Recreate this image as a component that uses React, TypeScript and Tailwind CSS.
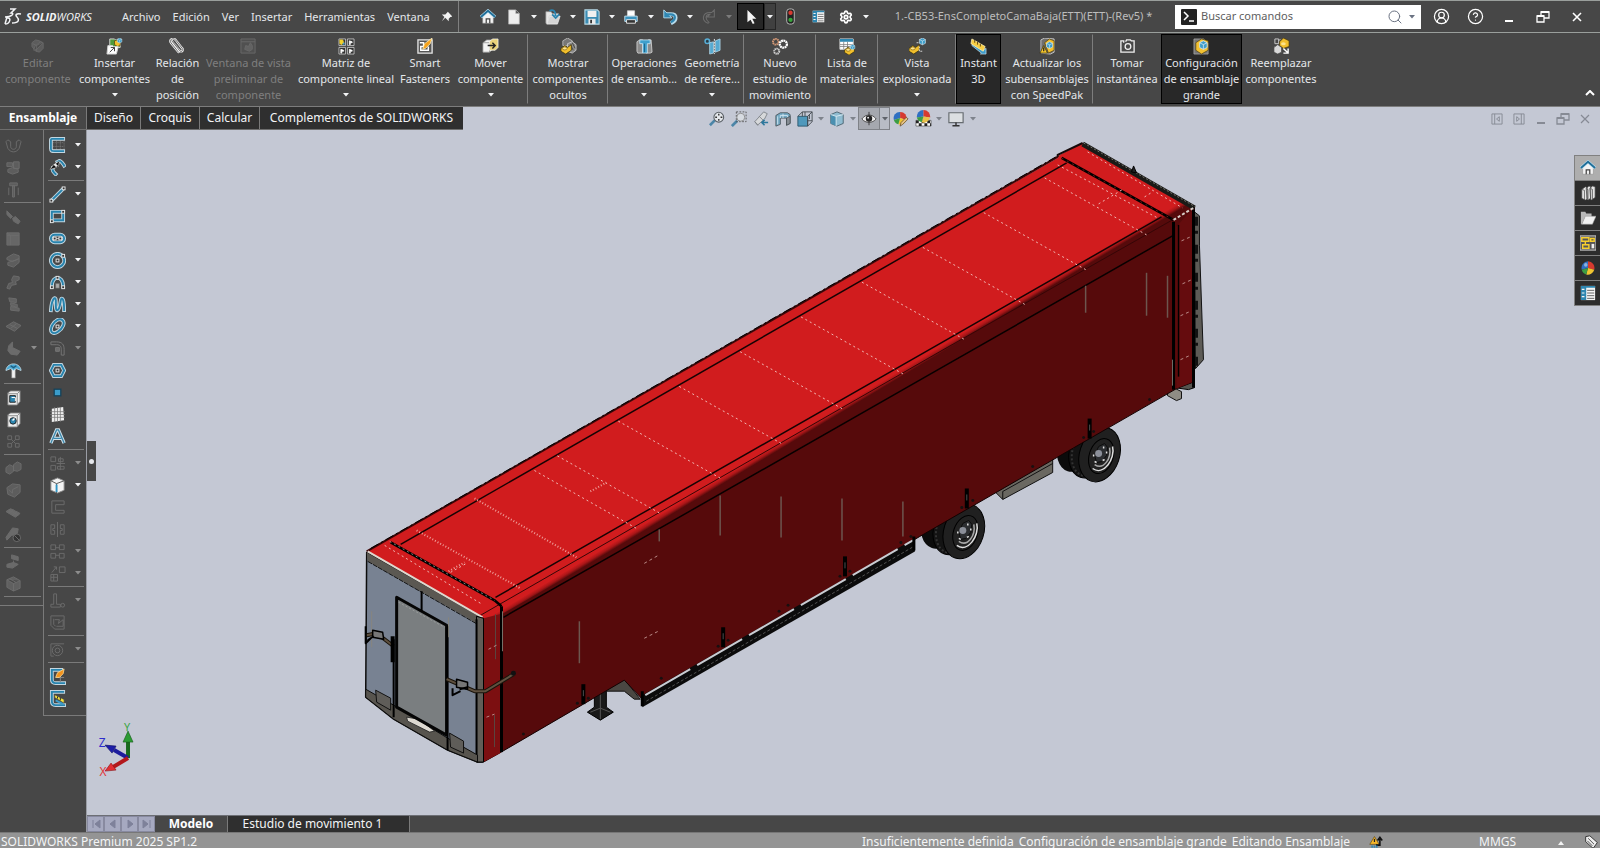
import React from "react";
import { Search, CircleUserRound, CircleHelp, Settings } from "lucide-react";

type IconName = string;

/* Two-tone stroke: pale outline with a blue core. */
const Duo = ({ d }: { d: string }) => (
  <>
    <path d={d} fill="none" stroke="#c3d6e0" strokeWidth="4" strokeLinecap="square" />
    <path d={d} fill="none" stroke="#2783ad" strokeWidth="2" strokeLinecap="square" />
  </>
);

const Node = ({ x, y }: { x: number; y: number }) => (
  <rect x={x - 1.5} y={y - 1.5} width="3" height="3" fill="#333" stroke="#e8e8e8" />
);

const Part = ({ c = "#f2bf2c" }: { c?: string }) => (
  <>
    <path d="M2 10l4-3 3 2 4-3v6l-6 4-5-3z" fill={c} stroke="#3b3210" strokeWidth=".8" />
    <ellipse cx="6" cy="10" rx="2.5" ry="1.6" fill="#ffe48a" stroke="#6b5310" strokeWidth=".6" />
  </>
);

const Cube = ({ x = 0, y = 0, s = 1 }: { x?: number; y?: number; s?: number }) => (
  <g transform={`translate(${x} ${y}) scale(${s})`}>
    <path d="M0 2l4-2 4 2v5l-4 2-4-2z" fill="#3d9dc9" stroke="#dcebf3" strokeWidth=".8" />
    <path d="M0 2l4 2 4-2M4 4v5" fill="none" stroke="#dcebf3" strokeWidth=".8" />
  </g>
);

const drawings: Record<IconName, React.ReactNode> = {
  editPart: (
    <g fill="#666" stroke="#7b7b7b" strokeWidth=".8">
      <path d="M2 5l4-3 4 1 4 2v6l-4 4-4-1-4-5z" />
      <path d="M5 9l6-5 2 2-6 6-3 1z" fill="#505050" />
      <path d="M3 6l4 2 5-3M7 8v6" fill="none" />
    </g>
  ),
  insertPart: (
    <>
      <path d="M4 1h5l1 1h5v8H4z" fill="#4e9a3a" stroke="#d8d8d8" />
      <path d="M9 3l3-1 3 2v4l-3 1-3-2z" fill="#f2bf2c" stroke="#47380a" strokeWidth=".7" />
      <Cube x={12} y={0} s={0.6} />
      <path d="M2 8h5l1 1h5l-2 8H1z" fill="#fff" stroke="#cfcfcf" />
      <path d="M4 15l5-5m0 4v-4H5" fill="none" stroke="#333" />
    </>
  ),
  clip: (
    <g fill="none" strokeLinecap="round">
      <path d="M3 3l8 10c2 3 5 0 3-2L7 2C4-1 0 2 2 5l8 10" stroke="#f0f0f0" strokeWidth="2.4" />
      <path d="M3 3l8 10c2 3 5 0 3-2L7 2C4-1 0 2 2 5l8 10M5 4l7 8" stroke="#5c5c5c" strokeWidth=".9" />
    </g>
  ),
  previewWin: (
    <g fill="none" stroke="#777">
      <path d="M1 1h15v15H1zM1 4h15" fill="#555" />
      <path d="M5 12l1-4 3 1 2-4 2 3v4l-3 2z" fill="#6e6e6e" />
    </g>
  ),
  pattern: (
    <g strokeWidth=".8">
      <path d="M1 1h7v7H1zM10 1h7v7h-7zM1 10h7v7H1zM10 10h7v7h-7z" fill="#333" stroke="#d5d5d5" />
      <path d="M2 2h3l1 3-2 2-2-1z" fill="#f2d02c" stroke="#f2d02c" />
      <path d="M5 5h2v2H5z" fill="#4aa7d2" />
      <path d="M12 3v4h1V5h2V4zM3 12v4h1v-2h2v-1zM12 12v4h1v-2h2v-1z" fill="#fff" stroke="#fff" />
    </g>
  ),
  smart: (
    <>
      <path d="M1 2h15v14H1z" fill="#555" stroke="#e6e6e6" strokeWidth="1.4" />
      <path d="M3 5h4v4H4v4h8V9" fill="none" stroke="#fff" strokeWidth="1.6" />
      <path d="M6 12l2-6 8-6-2 6-5 5z" fill="#f6a21c" stroke="#fff3c0" strokeWidth=".8" />
    </>
  ),
  move: (
    <>
      <path d="M1 5l4-3h7v9l-4 4H1z" fill="#f4f4f4" stroke="#9a9a9a" strokeWidth=".8" />
      <path d="M1 5h7v10M8 5l4-3" fill="none" stroke="#888" strokeWidth=".8" />
      <path d="M8 4l3-3h6v9l-3 3H8z" fill="#e9d27a" stroke="#fff" strokeWidth=".7" />
      <path d="M6 8h8M11 5l3 3-3 3" fill="none" stroke="#222" strokeWidth="1.5" />
    </>
  ),
  showHidden: (
    <>
      <path d="M3 3l5-3 5 3v5H3z" fill="#777" stroke="#c8c8c8" strokeWidth=".8" />
      <path d="M8 6l5-2 4 3v6l-4 3-5-2z" fill="#8c8c8c" stroke="#d8d8d8" strokeWidth=".8" />
      <path d="M11 7l3 6M13 5l3 6" stroke="#444" />
      <g transform="translate(-1 1)"><Part /></g>
    </>
  ),
  asmFeat: (
    <>
      <path d="M1 4l3-2h3v14H2l-1-2zM11 4l2-2h3l1 13-2 1h-4z" fill="#8c8c8c" stroke="#e2e2e2" strokeWidth=".8" />
      <path d="M4 2h11v4h-3v10H7V6H4z" fill="#3f9fcc" stroke="#d7edf8" strokeWidth=".8" />
      <path d="M9 6v9" stroke="#1c6387" />
    </>
  ),
  refGeo: (
    <>
      <circle cx="3.5" cy="3.5" r="2.4" fill="#2a3c46" stroke="#58aed6" strokeWidth="1.6" />
      <path d="M6 5l4-1v12l-4 1zM12 3l5-2v12l-5 2z" fill="#55a9d0" stroke="#b7dcee" strokeWidth=".8" />
      <path d="M11 1v16" stroke="#eee" strokeDasharray="2 1" />
    </>
  ),
  study: (
    <g fill="none">
      <circle cx="4" cy="4" r="3" stroke="#d79a76" strokeWidth="2" strokeDasharray="1.6 .6" />
      <circle cx="12" cy="6.5" r="3.8" stroke="#fff" strokeWidth="2.4" strokeDasharray="2 .5" />
      <circle cx="5" cy="14" r="2.7" stroke="#cfcfcf" strokeWidth="2" strokeDasharray="1.5 .5" />
    </g>
  ),
  bom: (
    <>
      <path d="M1 1h14v11H1z" fill="#fff" stroke="#d8d8d8" />
      <path d="M1 1h14v3H1z" fill="#2f88b2" />
      <path d="M1 7h14M1 9h14M5 4v8M9 4v8" stroke="#777" strokeWidth=".8" />
      <g transform="translate(4 3) scale(.95)"><Part /></g>
      <Cube x={12} y={7} s={0.6} />
    </>
  ),
  exploded: (
    <>
      <g transform="translate(-2 1)"><Part /></g>
      <Cube x={11} y={0} s={0.8} />
      <path d="M11 9v5h3M8 5h2" fill="none" stroke="#eee" strokeWidth=".9" strokeDasharray="2 1" />
    </>
  ),
  instant: (
    <>
      <path d="M2 8l10 8-1 1h6v-6l-2 1L4 4z" fill="#3d9bca" stroke="#cfe6f2" strokeWidth=".7" />
      <path d="M2 1l14 8-2 5L1 6z" fill="#f7cf45" stroke="#fff0b8" strokeWidth=".8" />
      <path d="M5 2v3M8 4v3M11 6v3" stroke="#5a4510" />
    </>
  ),
  speedpak: (
    <>
      <path d="M2 2l4-2 10 1v14l-4 2-10-1z" fill="#6f6f6f" stroke="#d2d2d2" strokeWidth=".9" />
      <path d="M6 5l5-4 5 2v10l-6 3z" fill="#f2bf2c" stroke="#4a3a0a" strokeWidth=".7" />
      <Cube x={8} y={4} s={0.8} />
      <path d="M5 8l4 8H1z" fill="#f8c92e" stroke="#3c3008" strokeWidth=".8" />
      <path d="M5 10v4" stroke="#222" strokeWidth="1.3" />
    </>
  ),
  camera: (
    <g fill="none" stroke="#efefef" strokeWidth="1.4">
      <path d="M5 5V3H2v12h14V3h-3l-1-1H8L7 4" />
      <circle cx="9.500" cy="9" r="3" />
    </g>
  ),
  largeAsm: (
    <>
      <path d="M1 1h10l5 4v12H1z" fill="#757575" stroke="#a9a9a9" strokeWidth=".8" />
      <path d="M3 5l6-4 7 2v10l-7 4-6-4z" fill="#f3c233" stroke="#4b3b0a" strokeWidth=".7" />
      <Cube x={7} y={3} s={1} />
    </>
  ),
  replace: (
    <>
      <path d="M2 1h4v5H2zM2 9v3M8 1l-2 2" stroke="#ccc" fill="none" />
      <path d="M7 4l4-4 6 3v6l-6 2-4-3z" fill="#f2bf2c" stroke="#463609" strokeWidth=".7" />
      <ellipse cx="11" cy="6" rx="2.500" ry="1.600" fill="#ffe48a" />
      <path d="M1 10l4-3 4 3v5l-4 2-4-2z" fill="#d9d9d9" stroke="#444" strokeWidth=".7" />
      <path d="M11 11l5 5M16 11v5h-5" fill="none" stroke="#fff" strokeWidth="1.5" />
    </>
  ),
  home: (
    <>
      <path d="M3 8l6-5 6 5v8H3z" fill="#f3f3f3" stroke="#888" strokeWidth=".6" />
      <path d="M1 9l8-7 8 7" fill="none" stroke="#bfe0f0" strokeWidth="3.4" />
      <path d="M1 9l8-7 8 7" fill="none" stroke="#1f6e98" strokeWidth="2" />
      <path d="M7 16v-5h4v5" fill="none" stroke="#444" strokeWidth="1.4" />
    </>
  ),
  newDoc: <path d="M3 1h8l4 4v12H3zM11 1v4h4" fill="#eee" stroke="#b5b5b5" strokeWidth=".8" />,
  open: (
    <>
      <path d="M1 3h6l1 2h7v3H5L3 16H1z" fill="#e6e6e6" stroke="#999" strokeWidth=".8" />
      <path d="M5 8h12l-3 9H2z" fill="#d4d4d4" stroke="#f4f4f4" strokeWidth=".8" />
      <path d="M5 2c4-2 7 0 7 6M8 6l4 4 4-4" fill="none" stroke="#2a84b0" strokeWidth="2" />
    </>
  ),
  save: (
    <>
      <path d="M1 1h14l2 2v14H1z" fill="#3c8cb3" stroke="#b8dbea" strokeWidth="1.2" />
      <path d="M4 2h10v7H4z" fill="#f0f0f0" />
      <path d="M5 11h8v6H5z" fill="#e8e8e8" />
      <path d="M7 12h2v4H7z" fill="#333" />
    </>
  ),
  print: (
    <>
      <path d="M5 2h8v6H5z" fill="#fff" stroke="#ccc" />
      <path d="M2 8h14v6H2z" fill="#3c94c0" stroke="#cbe5f1" />
      <path d="M4 12h10v4H4z" fill="#333" stroke="#eee" />
    </>
  ),
  undo: (
    <>
      <path d="M4 6h6c7 0 7 7 0 10" fill="none" stroke="#b8dcec" strokeWidth="4.500" />
      <path d="M2 1v9h9z" fill="#2f86b2" stroke="#b8dcec" />
      <path d="M4 6h6c6 0 6 6 0 9" fill="none" stroke="#2f86b2" strokeWidth="2.400" />
    </>
  ),
  redo: (
    <path d="M15 1v8H7l3-3c-5 0-6 5-1 9l-1 1C0 13 1 3 12 4z" fill="none" stroke="#6c6c6c" strokeWidth="1.200" />
  ),
  cursor: <path d="M5 1v14l3.500-3 2.500 5 2-1-2.500-5H15z" fill="#f5f5f5" />,
  traffic: (
    <>
      <rect x="5" y="1" width="8" height="16" rx="3" fill="#222" stroke="#bdbdbd" />
      <circle cx="9" cy="5" r="2.300" fill="#d63a31" />
      <circle cx="9" cy="12.500" r="2.300" fill="#36a53a" />
    </>
  ),
  props: (
    <>
      <path d="M1 1h16v16H1z" fill="#f5f5f5" />
      <path d="M1 1h6v16H1zM1 1h16v2H1z" fill="#2e86b0" />
      <path d="M2 5h3M2 9h3M2 13h3" stroke="#f5f5f5" strokeWidth="1.400" />
      <path d="M8 6h8M8 9h8M8 12h8M8 15h8" stroke="#555" />
    </>
  ),
  zoomFit: (
    <g fill="none">
      <path d="M7 10l-6 6" stroke="#4c86a8" strokeWidth="3" />
      <circle cx="11" cy="7" r="5.500" fill="#e3e6ea" stroke="#5a6066" strokeWidth="1.200" />
      <path d="M11 3v2m0 4v2M7 7h2m4 0h2" stroke="#333" strokeWidth="1.600" />
    </g>
  ),
  zoomArea: (
    <g fill="none">
      <path d="M7 11l-6 6" stroke="#4c86a8" strokeWidth="3" />
      <path d="M6 1h11v11H6z" stroke="#555" strokeDasharray="2 1.500" />
      <circle cx="11" cy="7" r="4.500" fill="#d7dbe1" stroke="#888" />
    </g>
  ),
  prevView: (
    <>
      <path d="M2 12L12 1l4 2-3 6-8 7z" fill="#d6d8da" stroke="#7d8287" />
      <path d="M2 12l4 4M7 6l5 5" stroke="#7d8287" />
      <path d="M17 13h-6m2-3l-3 3 3 3" fill="none" stroke="#2d789d" strokeWidth="1.800" />
    </>
  ),
  section: (
    <>
      <path d="M1 5l5-3h8l3 2v10l-4 2V8H6v7l-5 2z" fill="#73a8c2" stroke="#414b52" strokeWidth=".9" />
      <path d="M6 8V5h8v3M3 6v9M9 3v5" fill="none" stroke="#d3e7f1" />
      <path d="M13 8l4-2v8l-4 2z" fill="#888f96" stroke="#3c4247" strokeWidth=".7" />
    </>
  ),
  viewOrient: (
    <>
      <path d="M1 6h11v11H1z" fill="#4f98bb" stroke="#2b566b" />
      <path d="M1 6l5-5h11v11l-5 5M6 1v5M17 1l-5 5M12 6v11M12 11h5M9 1v5M14 4v5" fill="none" stroke="#3f464c" />
    </>
  ),
  displayStyle: (
    <>
      <path d="M2 4l7-3 7 3v10l-7 3-7-3z" fill="#8fbcd1" stroke="#48616e" />
      <path d="M2 4l6 2v11l-6-3z" fill="#4a8fb0" />
      <path d="M2 4l6 2 8-2M8 6v11" fill="none" stroke="#dcecf4" />
    </>
  ),
  eye: (
    <>
      <path d="M1 9c4-6 12-6 16 0-4 5-12 5-16 0z" fill="#efefef" stroke="#444" />
      <circle cx="9" cy="8.500" r="3.600" fill="#222" />
      <path d="M9 1v15" stroke="#333" />
      <circle cx="8" cy="7.500" r="1" fill="#fff" />
    </>
  ),
  ball: (
    <>
      <path d="M9 9L9 1.500A7.500 7.500 0 0 0 2 11z" fill="#2f6fc2" />
      <path d="M9 9V1.500A7.500 7.500 0 0 1 16 11z" fill="#d63a2f" />
      <path d="M9 9l7 2A7.500 7.500 0 0 1 7 16.300z" fill="#f0c431" />
      <path d="M9 9l-2 7.300A7.500 7.500 0 0 1 2 11z" fill="#3c9d43" />
      <circle cx="6.500" cy="5.500" r="2" fill="#fff" opacity=".45" />
    </>
  ),
  appearance: (
    <>
      <path d="M8 8V1a7 7 0 0 0-7 9z" fill="#2f6fc2" />
      <path d="M8 8V1a7 7 0 0 1 7 9z" fill="#d63a2f" />
      <path d="M8 8l7 2a7 7 0 0 1-9 5z" fill="#f0c431" />
      <path d="M8 8l-2 7a7 7 0 0 1-5-5z" fill="#3c9d43" />
      <path d="M8 17l1-4 6-6 2 2-6 6z" fill="#e6c184" stroke="#5b4422" strokeWidth=".8" />
    </>
  ),
  scene: (
    <>
      <path d="M1 11h16v6H1z" fill="#fff" stroke="#333" strokeWidth=".6" />
      <path d="M1 11h3v3H1zM7 11h3v3H7zM13 11h3v3h-3zM4 14h3v3H4zM10 14h3v3h-3zM16 14h1v3h-1z" fill="#222" />
      <path d="M9 7V0a7 7 0 0 0-7 8z" fill="#2f6fc2" />
      <path d="M9 7V0a7 7 0 0 1 7 8z" fill="#d63a2f" />
      <path d="M9 7l7 1a7 7 0 0 1-9 5z" fill="#e9c14a" />
      <path d="M9 7l-2 6a7 7 0 0 1-5-5z" fill="#3c9d43" />
    </>
  ),
  monitor: (
    <>
      <path d="M1 2h16v11H1z" fill="#dcdfe2" stroke="#666b70" strokeWidth="1.300" />
      <path d="M9 13v3M5 16.500h8" stroke="#333" strokeWidth="1.600" />
    </>
  ),
  library: (
    <g fill="#e6e6e6" stroke="#444" strokeWidth=".8">
      <path d="M2 5l4-3 2 1v13l-2 1-4-2zM7 4l3-3 2 1v13l-3 2-1-1zM11 4l3-3 3 1v12l-4 3-1-1z" />
      <path d="M2 5l3 1v11M7 4l2 1v11M12 4l2 1v11" fill="none" />
    </g>
  ),
  folder: (
    <>
      <path d="M1 2h5l1 2h6v4H6L2 16H1z" fill="#b9b9b9" />
      <path d="M6 7h12l-4 9H2z" fill="#f1f1f1" stroke="#999" strokeWidth=".6" />
    </>
  ),
  viewPalette: (
    <>
      <path d="M0 1h18v16H0z" fill="#555" stroke="#ddd" />
      <path d="M2 3h8v4H2zM6 7v4M3 11h7v4H3zM12 4h4v3h-4z" fill="none" stroke="#f6ce2e" strokeWidth="1.600" />
      <path d="M13 10h3v5h-3z" fill="#eee" />
    </>
  ),
  sketch: (
    <>
      <path d="M4 2h12v12H4zM8 2v12M12 2v12M4 6h12M4 10h12" fill="none" stroke="#7c7c7c" strokeDasharray="1 1" />
      <Duo d="M15 2H3c-1 0-1 1-1 2v8c0 3 1 3 4 3h9" />
    </>
  ),
  dimension: (
    <>
      <Duo d="M9 3l2-1c2 0 3 2 5 5M4 10c-1 3 1 4 3 6" />
      <path d="M3 10l7-6" stroke="#eee" strokeWidth="3.600" />
      <path d="M1 11l4-5 3 3zM11 2L7 5l3 3z" fill="#111" stroke="#ccc" strokeWidth=".5" />
    </>
  ),
  line: (<><Duo d="M4 14L14 4" /><Node x={2.5} y={15.5} /><Node x={15.5} y={2.5} /></>),
  rect: (<><Duo d="M3 4h12v9H3z" /><Node x={3} y={14} /><Node x={15} y={4} /></>),
  slot: (<><Duo d="M6 5h6a4 4 0 0 1 0 8H6a4 4 0 0 1 0-8z" /><path d="M6 9h6" stroke="#bbb" /><Node x={6} y={9} /><Node x={12} y={9} /></>),
  circle: (<><Duo d="M9 2a7 7 0 1 0 .1 0" /><Node x={9} y={9} /><Node x={15} y={4} /></>),
  arc: (<><Duo d="M3 13c0-12 12-12 12 0" /><path d="M7 10h4v5H7z" fill="#aaa" stroke="#666" strokeWidth=".6" /><Node x={3} y={14} /><Node x={15} y={14} /><Node x={9} y={4} /></>),
  spline: <Duo d="M2 15C3 3 6 1 7 3s-1 13 2 12 3-11 4-12 3 0 3 12" />,
  ellipse: (<><Duo d="M3 15C0 11 5 4 9 2s8 1 6 6-9 10-12 7z" /><Node x={9} y={9} /></>),
  fillet: (<g fill="none" stroke="#767676"><path d="M2 2h6c6 0 8 3 8 8v6h-3v-6c0-3-1-5-5-5H2z" /><path d="M7 8h4v4H7z" fill="#6b6b6b" /></g>),
  polygon: (<><Duo d="M5 3h8l3 6-3 6H5L2 9z" /><Node x={9} y={9} /></>),
  point: <rect x="5.500" y="5.500" width="7" height="7" fill="#3a9cca" stroke="#16435a" strokeWidth="1.400" />,
  grid: (<><path d="M3 3l12-2 1 14-13 2z" fill="#eee" /><path d="M6 1v16M9 1v16M12 1v16M1 6h16M1 9h16M1 12h16" stroke="#777" strokeWidth=".8" /></>),
  text: (
    <>
      <path d="M2 16L8 2h2l6 14M5 11h8" fill="none" stroke="#cfe0e9" strokeWidth="3.600" />
      <path d="M2 16L8 2h2l6 14M5 11h8" fill="none" stroke="#3c87ab" strokeWidth="1.400" />
    </>
  ),
  whiteCube: (
    <>
      <path d="M2 4l7-3 7 3v10l-7 3-7-3z" fill="#f4f4f4" stroke="#888" />
      <path d="M2 4l6 3 8-3M8 7v10" fill="none" stroke="#555" />
      <path d="M8 8v8" stroke="#2f94c4" strokeWidth="2" />
    </>
  ),
  hole: (
    <>
      <path d="M3 4l3-2h10v11l-3 4H3z" fill="#eee" stroke="#777" />
      <path d="M13 16V5H3M13 5l3-3" fill="none" stroke="#888" />
      <path d="M5 7h6v7H5z" fill="#2d86b0" stroke="#222" />
      <path d="M7 9h4v4" stroke="#fff" fill="none" />
    </>
  ),
  holeRound: (
    <>
      <path d="M3 4l3-2h10v11l-3 4H3z" fill="#eee" stroke="#777" />
      <path d="M13 16V5H3M13 5l3-3" fill="none" stroke="#888" />
      <circle cx="8.500" cy="10.500" r="3.400" fill="#2d86b0" stroke="#222" />
      <path d="M8 10l2-2" stroke="#fff" strokeWidth="1.600" />
    </>
  ),
  anchor: (
    <>
      <path d="M7 6h4v11H7z" fill="#f2f2f2" stroke="#777" strokeWidth=".7" />
      <path d="M1 9c0-3 3-7 8-7s8 4 8 7l-5-2-3 2-3-2z" fill="#4aa7d2" stroke="#d1eaf5" strokeWidth=".8" />
      <path d="M6 4l3 2 3-2" stroke="#1f5f80" fill="none" strokeWidth="1.400" />
    </>
  ),
  sketchEdit: (
    <>
      <Duo d="M13 2H3v10c0 3 1 4 4 4h9" />
      <path d="M8 10h8M12 6v9" stroke="#888" />
      <path d="M7 10l2-5 7-4-1 5-4 4z" fill="#f2921d" stroke="#ffe09a" strokeWidth=".8" />
    </>
  ),
  sketchInstant: (
    <>
      <Duo d="M15 2H3v10c0 3 1 4 4 4h9" />
      <path d="M6 5l10 5v4L6 8z" fill="#f6e33c" stroke="#444" strokeWidth=".7" />
      <path d="M9 7v2M12 8v3" stroke="#222" />
      <path d="M7 11l8 4" stroke="#3b9dcb" strokeWidth="2" />
    </>
  ),
  d_horseshoe: <path d="M3 3l3 2v5c0 4 6 4 6 0V5l3-2M3 3L1 5l2 7c3 5 9 5 12 0l2-7-2-2" />,
  d_blocks: <path d="M2 4h6v4H2zM9 3h6v7H9zM3 11l5-2 6 2v3l-6 2-5-2z" fill="#5d5d5d" />,
  d_bolt: <path d="M5 2h8v3H5zM8 5h2v12H8zM4 7v8M14 7v8" fill="#5d5d5d" />,
  d_chain: <path d="M2 3l6 6-2 2-4-4zM8 11l3-2 5 5-2 3-5-3z" fill="#6b6b6b" />,
  d_box: <path d="M2 3h13v13H2zM2 6h13M6 6v10M2 3l4 3" fill="#666" />,
  d_hinge: <path d="M2 6l7-4 6 2v3l-7 3-6-2zM3 11l7-2 5-2v4l-6 5-6-2z" fill="#5d5d5d" />,
  d_steps: <path d="M9 2l6 1v3l-4 2 1 3-5 1-2 4-3-1 2-5 4-1-1-3z" fill="#5d5d5d" />,
  d_stack: <path d="M4 2l8 1v4l-7-1zM6 7l7 2v3l-7-2zM6 11l9 2v3l-9-1z" fill="#626262" />,
  d_plane: <path d="M1 9l8-5 8 4-7 6zM5 7l8 4M12 6l-6 5" fill="#5d5d5d" />,
  d_elbow: <path d="M4 6l4-4v6l8 4-3 4-7-1-3-4z" fill="#6b6b6b" />,
  d_cross: <path d="M3 3h4v4H3zM11 3h4v4h-4zM3 11h4v4H3zM11 11h4v4h-4zM7 7l4 4M11 7l-4 4" />,
  d_parts: <path d="M1 8l4-3 4 2v5l-4 3-4-2zM9 5l4-3 4 2v6l-4 2-4-1z" fill="#5d5d5d" />,
  d_rotate: <path d="M2 6l6-4 8 1v8l-6 5-7-3zM4 8l4 4M8 12V8l6-3" fill="#5d5d5d" />,
  d_mat: <path d="M1 8l5-3 10 5-5 4zM4 6l10 6M9 6l-5 4M13 8l-5 4" fill="#6a6a6a" />,
  d_cancel: (<><path d="M8 2l6 1-1 5-6 2-5 5-1-3z" fill="#6a6a6a" /><circle cx="12.500" cy="12.500" r="4" fill="#333" /><path d="M10 10l5 5" /></>),
  d_shelf: <path d="M7 2l7 2v4l-7-2zM9 8v3M2 12l7-2 5 2-6 4-6-1z" fill="#6a6a6a" />,
  d_brick: <path d="M2 5l7-3 7 4v8l-7 3-7-4zM2 5l7 4 7-3M9 9v8M5 4l7 4" fill="#606060" />,
  d_trim: <path d="M2 2h5v5H2zM2 11h5v5H2zM8 9h9M12 2v14M10 4h5v3h-5zM9 12h7v3H9z" />,
  d_offset: <path d="M16 2H3v13h13v-3H7V6h9z" />,
  d_mirror: <path d="M9 1v16M2 4h4v4H4v2h2v4H2zM16 4h-4v4h2v2h-2v4h4z" />,
  d_grid4: <path d="M2 2h5v5H2zM11 2h5v5h-5zM2 11h5v5H2zM11 11h5v5h-5zM7 5h4M7 13h4" />,
  d_moveEnt: <path d="M3 8l5-6M5 2h3v3M11 2h6v6h-6zM2 10h7v7H2zM2 13h7M5 10v7" />,
  d_perp: (<><path d="M5 2h3v11h4v3H2v-3h3z" /><circle cx="14.500" cy="14" r="2" /></>),
  d_repair: <path d="M2 2h14v14H6l-4-4zM5 5v6l2 2M6 6h5l-1 4 5-4v7H8" />,
  d_snap: (<><path d="M2 3h14M2 3v13h3" /><circle cx="9" cy="10" r="5.500" /><circle cx="9" cy="10" r="2.500" /></>),
  rebuild: (
    <>
      <path d="M7 2l6 10H1z" fill="#f7b82a" stroke="#5a420a" strokeWidth=".8" />
      <path d="M7 5v4" stroke="#222" strokeWidth="1.600" />
      <path d="M9 13h5V5m-3 2l3-4 3 4" fill="none" stroke="#111" strokeWidth="2" />
      <path d="M3 15h9" stroke="#2f86b2" strokeWidth="3" strokeDasharray="2 1" />
    </>
  ),
  tag: (
    <>
      <path d="M2 2l5-1 9 8-5 7-9-8z" fill="#eee" stroke="#222" />
      <path d="M5 4l7 7M4 7l6 6" stroke="#333" />
    </>
  ),
};

const Icon = ({ name, className = "size-[18px]" }: { name: IconName; className?: string }) => {
  const dim = name.startsWith("d_");
  return (
    <svg viewBox="0 0 18 18" className={`shrink-0 ${className}`} aria-hidden="true">
      {dim ? (
        <g fill="none" stroke="#6c6c6c" strokeWidth="1">{drawings[name]}</g>
      ) : (
        drawings[name]
      )}
    </svg>
  );
};

const Caret = ({ className = "text-gray-100" }: { className?: string }) => (
  <svg viewBox="0 0 6 4" className={`h-1 w-1.5 shrink-0 ${className}`} aria-hidden="true">
    <path d="M0 0h6L3 3.500z" fill="currentColor" />
  </svg>
);

/* ---------- title bar ---------- */

const menus = ["Archivo", "Edición", "Ver", "Insertar", "Herramientas", "Ventana"];

const quick = [
  { icon: "newDoc", label: "Nuevo" },
  { icon: "open", label: "Abrir" },
  { icon: "save", label: "Guardar" },
  { icon: "print", label: "Imprimir" },
  { icon: "undo", label: "Deshacer" },
  { icon: "redo", label: "Rehacer", off: true },
];

const Restore = ({ className }: { className: string }) => (
  <svg viewBox="0 0 14 14" className={`size-3.5 ${className}`} aria-hidden="true">
    <path d="M1 6h7v6H1zM5 6V2h8v6H8" fill="none" stroke="currentColor" strokeWidth="1.300" />
    <path d="M1 6h7M5 2h8" stroke="currentColor" strokeWidth="2" />
  </svg>
);

const TitleBar = () => (
  <header className="flex h-[33px] shrink-0 items-center border-y border-[#9a9f9c] bg-[#474747] text-[11px] text-gray-200">
    <div className="flex w-[122px] shrink-0 items-center gap-1 pl-1 text-gray-100">
      <svg viewBox="0 0 18 18" className="size-[18px]" aria-label="3DS">
        <path
          d="M6 1h5L7 5c4 0 1 4-6 4M3 9L1 16M3 10c5-1 3 6-2 6M17 6c-5-1-6 1-4 3s3 6-5 6"
          fill="none"
          stroke="currentColor"
          strokeWidth="1.500"
        />
      </svg>
      <span className="font-['Open_Sans','Lato',sans-serif] text-[11px] italic leading-4">
        <b>SOLID</b>WORKS
      </span>
    </div>
    <nav className="flex w-[319px] shrink-0 gap-3">
      {menus.map((m) => (
        <button key={m} className="leading-4">{m}</button>
      ))}
    </nav>
    <button aria-label="Fijar" className="flex w-[17px] shrink-0 justify-start">
      <svg viewBox="0 0 14 14" className="size-3" aria-hidden="true">
        <path d="M8 1l5 5-1 1h-1l-2 2v3L5 8l-4 4 3-5-3-3h4l2-2z" fill="#f3f3f3" />
      </svg>
    </button>
    <div className="flex h-full shrink-0 items-center border-l border-[#808080] pl-[15px]">
      <button aria-label="Inicio" className="flex w-[27px] justify-center"><Icon name="home" className="size-4" /></button>
      {quick.map((q) => (
        <div key={q.icon} className="flex items-center">
          <button aria-label={q.label} className="flex w-[26px] justify-center"><Icon name={q.icon} className="size-4" /></button>
          <button aria-label={`Opciones de ${q.label}`} className="flex w-[13px] justify-center">
            <Caret className={q.off ? "text-[#7c7c7c]" : "text-gray-100"} />
          </button>
        </div>
      ))}
      <button aria-label="Seleccionar" className="ml-0.5 flex h-[27px] w-[27px] items-center justify-center border border-black bg-[#262626]"><Icon name="cursor" className="size-4" /></button>
      <button aria-label="Opciones de selección" className="flex h-[27px] w-3 items-center justify-center border border-[#262626] bg-[#404040]"><Caret /></button>
      <button aria-label="Reconstruir" className="flex w-7 justify-center"><Icon name="traffic" className="size-[17px]" /></button>
      <button aria-label="Propiedades" className="flex w-7 justify-center"><Icon name="props" className="size-[13px]" /></button>
      <button aria-label="Opciones" className="flex w-[27px] justify-center"><Settings className="size-3.5 text-white" strokeWidth={3} /></button>
      <button aria-label="Más opciones" className="flex w-[13px] justify-center"><Caret /></button>
    </div>
    <h1 className="flex-1 whitespace-nowrap text-center text-[#bdbdbd]">
      1.-CB53-EnsCompletoCamaBaja(ETT)(ETT)-(Rev5) *
    </h1>
    <label className="flex h-6 w-[246px] shrink-0 items-center bg-white px-1.5">
      <svg viewBox="0 0 16 16" className="size-4 shrink-0" aria-hidden="true">
        <rect width="16" height="16" rx="1" fill="#222" />
        <path d="M3 3l4 4-4 4M8 12h5" fill="none" stroke="#fff" strokeWidth="1.500" />
      </svg>
      <input
        aria-label="Buscar comandos"
        placeholder="Buscar comandos"
        className="ml-1 min-w-0 flex-1 bg-transparent outline-none placeholder:text-[#5e5e5e]"
      />
      <Search className="mx-1.5 size-4 text-gray-500" strokeWidth={1.5} />
      <Caret className="text-gray-500" />
    </label>
    <div className="mr-1.5 ml-[3px] flex shrink-0 text-white">
      <button aria-label="Usuario" className="flex w-[34px] items-center justify-center"><CircleUserRound className="size-[17px]" strokeWidth={1.75} /></button>
      <button aria-label="Ayuda" className="flex w-[34px] items-center justify-center"><CircleHelp className="size-[17px]" strokeWidth={1.75} /></button>
      <button aria-label="Minimizar" className="flex w-[34px] items-center justify-center pt-2"><span className="h-0.5 w-2 bg-white" /></button>
      <button aria-label="Restaurar" className="flex w-[34px] items-center justify-center"><Restore className="text-white" /></button>
      <button aria-label="Cerrar" className="flex w-[34px] items-center justify-center">
        <svg viewBox="0 0 10 10" className="size-2.5" aria-hidden="true"><path d="M1 1l8 8M9 1L1 9" stroke="currentColor" strokeWidth="1.600" /></svg>
      </button>
    </div>
  </header>
);

/* ---------- ribbon ---------- */

type Cmd = { icon: IconName; lines: string[]; w: string; caret?: boolean; off?: boolean; on?: boolean; end?: boolean };

const commands: Cmd[] = [
  { icon: "editPart", lines: ["Editar", "componente"], w: "w-[76px]", off: true },
  { icon: "insertPart", lines: ["Insertar", "componentes"], w: "w-[77px]", caret: true },
  { icon: "clip", lines: ["Relación", "de", "posición"], w: "w-[49px]" },
  { icon: "previewWin", lines: ["Ventana de vista", "preliminar de", "componente"], w: "w-[93px]", off: true },
  { icon: "pattern", lines: ["Matriz de", "componente lineal"], w: "w-[102px]", caret: true },
  { icon: "smart", lines: ["Smart", "Fasteners"], w: "w-[56px]" },
  { icon: "move", lines: ["Mover", "componente"], w: "w-[75px]", caret: true, end: true },
  { icon: "showHidden", lines: ["Mostrar", "componentes", "ocultos"], w: "w-[80px]", end: true },
  { icon: "asmFeat", lines: ["Operaciones", "de ensamb..."], w: "w-[72px]", caret: true },
  { icon: "refGeo", lines: ["Geometría", "de refere..."], w: "w-[64px]", caret: true, end: true },
  { icon: "study", lines: ["Nuevo", "estudio de", "movimiento"], w: "w-[72px]", end: true },
  { icon: "bom", lines: ["Lista de", "materiales"], w: "w-[62px]", end: true },
  { icon: "exploded", lines: ["Vista", "explosionada"], w: "w-[78px]", caret: true, end: true },
  { icon: "instant", lines: ["Instant", "3D"], w: "w-[45px]", on: true },
  { icon: "speedpak", lines: ["Actualizar los", "subensamblajes", "con SpeedPak"], w: "w-[92px]", end: true },
  { icon: "camera", lines: ["Tomar", "instantánea"], w: "w-[68px]" },
  { icon: "largeAsm", lines: ["Configuración", "de ensamblaje", "grande"], w: "w-[81px]", on: true },
  { icon: "replace", lines: ["Reemplazar", "componentes"], w: "w-[78px]" },
];

const Ribbon = () => (
  <section className="flex h-[74px] shrink-0 items-stretch border-b border-[#7d7d7d] bg-[#474747] pt-px pb-0.5">
    {commands.map((c) => (
      <button
        key={c.lines.join(" ")}
        className={`flex shrink-0 flex-col items-center whitespace-nowrap border text-[11px] leading-4 ${c.w} ${
          c.on ? "border-black bg-[#282828]" : c.end ? "border-transparent border-r-[#7d7d7d]" : "border-transparent"
        } ${c.off ? "text-[#7f7f7f]" : "text-gray-200"}`}
      >
        <Icon name={c.icon} className={c.off ? "mt-[3px] size-[17px] opacity-70" : "mt-[3px] size-[17px]"} />
        {c.lines.map((l) => (
          <span key={l} className="block">{l}</span>
        ))}
        {c.caret && <span className="flex h-4 items-center"><Caret /></span>}
      </button>
    ))}
    <button aria-label="Contraer cinta" className="ml-auto flex w-5 items-end justify-center pb-2 text-white">
      <svg viewBox="0 0 10 6" className="h-1.5 w-2.5" aria-hidden="true"><path d="M1 5l4-4 4 4" fill="none" stroke="currentColor" strokeWidth="2" /></svg>
    </button>
  </section>
);

/* ---------- tab row with view toolbar ---------- */

const tabs = [
  { label: "Diseño", w: "w-[54px]" },
  { label: "Croquis", w: "w-[59px]" },
  { label: "Calcular", w: "w-[60px]" },
  { label: "Complementos de SOLIDWORKS", w: "w-[204px]" },
];

const VCaret = () => (
  <button aria-label="Más" className="flex w-2.5 items-center justify-center"><Caret className="text-[#7e838c]" /></button>
);

const TabRow = () => (
  <div className="flex h-[23px] shrink-0 bg-[#c4c8d4] text-[12px]">
    <div role="tablist" className="flex shrink-0 border-b border-[#6e6e6e] text-gray-100">
      <button role="tab" aria-selected="true" className="w-[86px] bg-[#474747] font-bold text-white">Ensamblaje</button>
      {tabs.map((t) => (
        <button key={t.label} role="tab" aria-selected="false" className={`whitespace-nowrap border-l border-[#7a7a7a] bg-[#2f2f2f] ${t.w}`}>
          {t.label}
        </button>
      ))}
    </div>
    <div role="toolbar" aria-label="Vista" className="ml-[243px] flex shrink-0 items-stretch">
      {["zoomFit", "zoomArea", "prevView", "section", "viewOrient"].map((n) => (
        <button key={n} aria-label={n} className="flex w-[22px] items-center justify-center"><Icon name={n} className="size-4" /></button>
      ))}
      <VCaret />
      <button aria-label="Estilo de visualización" className="flex w-[22px] items-center justify-center"><Icon name="displayStyle" className="size-4" /></button>
      <VCaret />
      <button aria-label="Ocultar/mostrar" className="flex w-[22px] items-center justify-center border border-[#7f8288] bg-[#a5a8af]"><Icon name="eye" className="size-4" /></button>
      <button aria-label="Opciones de visibilidad" className="flex w-2.5 items-center justify-center border border-l-0 border-[#7f8288] bg-[#b8bcc5]"><Caret className="text-[#5f636a]" /></button>
      <button aria-label="Editar aspecto" className="flex w-[22px] items-center justify-center"><Icon name="appearance" className="size-4" /></button>
      <button aria-label="Aplicar escena" className="flex w-[22px] items-center justify-center"><Icon name="scene" className="size-[17px]" /></button>
      <VCaret />
      <button aria-label="Configuración de vista" className="flex w-6 items-center justify-center"><Icon name="monitor" className="size-4" /></button>
      <VCaret />
    </div>
    <div className="ml-auto mr-1 flex shrink-0 items-center text-[#868a94]">
      {["M1 1h11v11H1zM4 1v11M9 4v5L6 6.500z", "M1 1h11v11H1zM9 1v11M4 4v5l3-2.500z"].map((d) => (
        <button key={d} aria-label="Panel" className="flex w-[22px] justify-center">
          <svg viewBox="0 0 13 13" className="size-3" aria-hidden="true"><path d={d} fill="none" stroke="currentColor" /></svg>
        </button>
      ))}
      <button aria-label="Minimizar documento" className="flex w-[22px] justify-center pt-2"><span className="h-0.5 w-2 bg-[#868a94]" /></button>
      <button aria-label="Restaurar documento" className="flex w-[22px] justify-center"><Restore className="text-[#868a94]" /></button>
      <button aria-label="Cerrar documento" className="flex w-[22px] justify-center">
        <svg viewBox="0 0 10 10" className="size-2.5" aria-hidden="true"><path d="M1 1l8 8M9 1L1 9" stroke="currentColor" strokeWidth="1.200" /></svg>
      </button>
    </div>
  </div>
);

/* ---------- side tool columns: "|" is a separator, "+" marks a drop-down ---------- */

const leftTools = [
  "d_horseshoe", "d_blocks", "d_bolt", "|",
  "d_chain", "d_box", "d_hinge", "d_steps", "d_stack", "d_plane", "d_elbow+", "anchor", "|",
  "hole", "holeRound", "d_cross", "|",
  "d_parts", "d_rotate", "d_mat", "d_cancel", "|",
  "d_shelf", "d_brick", "|",
];

const sketchTools = [
  "sketch+", "dimension+", "|",
  "line+", "rect+", "slot+", "circle+", "arc+", "spline+", "ellipse+", "fillet+", "polygon", "point", "grid", "text", "|",
  "d_trim+", "whiteCube+", "d_offset", "d_mirror", "d_grid4+", "d_moveEnt+", "|",
  "d_perp+", "d_repair", "|",
  "d_snap+", "|",
  "sketchEdit", "sketchInstant",
];

const ToolColumn = ({ tools, className }: { tools: string[]; className: string }) => (
  <div className={`flex shrink-0 flex-col self-start pt-1 ${className}`}>
    {tools.map((t, i) => {
      if (t === "|") return <hr key={i} className="my-0.5 ml-1 mr-0.5 border-[#7a7a7a]" />;
      const name = t.replace("+", "");
      const dim = name.startsWith("d_") || name === "fillet";
      return (
        <div key={i} className="flex h-[22px] items-center">
          <button aria-label={name.replace("d_", "")} className="flex w-[26px] justify-center"><Icon name={name} className="size-[17px]" /></button>
          {t.endsWith("+") && (
            <button aria-label="Más" className="flex w-4 justify-center"><Caret className={dim ? "text-[#8d8d8d]" : "text-gray-100"} /></button>
          )}
        </div>
      );
    })}
  </div>
);

/* ---------- 3D model ---------- */

const Wheel = ({ x, y }: { x: number; y: number }) => (
  <g transform={`translate(${x} ${y})`}>
    <ellipse cx="-24" cy="-8" rx="18" ry="26" transform="rotate(18 -24 -8)" fill="#0b0b0b" />
    <ellipse cx="-11" cy="-3" rx="19" ry="27" transform="rotate(18 -11 -3)" fill="#131313" stroke="#000" />
    <ellipse cx="-10" cy="-3" rx="17" ry="25" transform="rotate(18 -10 -3)" fill="none" stroke="#333" strokeWidth="2" strokeDasharray="2 2" />
    <ellipse rx="20" ry="28" transform="rotate(18)" fill="#202020" stroke="#000" />
    <ellipse cx="2" cy="1" rx="12" ry="18" transform="rotate(18)" fill="#222" stroke="#000" />
    <path d="M-7 14C4 22 16 4 13-8" fill="none" stroke="#e0e0e0" strokeWidth="1.500" />
    <path d="M-5 10C4 16 12 4 10-7" fill="none" stroke="#a8a8a8" strokeWidth="1.500" />
    <path d="M-5 1l4-9 6-3 3 4-1 8-5 6-5 1z" fill="#2c2e31" stroke="#0c0c0c" />
    <circle cx="-1" cy="-1" r="3.500" fill="#8b8f99" />
    <path d="M4-8v2M7-3v2M-5 7l2 1M3 6l2-1M-6 0v2" stroke="#e2e2e2" strokeWidth="1.500" />
  </g>
);

const seams = [0, 1, 2, 3, 4, 5, 6, 7, 8].map((n) => ({ x: 1045 - n * 61, y: 178 + n * 34.8 }));
const ribs = [
  [579, 622, 664], [659, 530, 542], [720, 496, 536], [781, 497, 538], [842, 499, 541],
  [903, 502, 537], [1086, 286, 313], [1147, 273, 316], [1168, 276, 318],
];
const latches = [[583, 685], [723, 628], [845, 557], [967, 489], [1090, 419]];
const bolts = [
  [577, 704], [588, 699], [661, 679], [718, 647], [728, 641], [779, 612], [788, 606], [840, 577], [850, 572],
  [901, 543], [911, 537], [962, 508], [973, 501], [1084, 438], [1094, 432], [1033, 467], [1150, 400], [523, 735],
];

const Trailer = () => (
  <g strokeLinejoin="round">
    {/* running gear behind the body */}
    <path d="M594 688h12v20l7 5-13 8-13-8 7-5z" fill="#191919" stroke="#000" />
    <path d="M600 690v30M590 713l10-4 10 4" stroke="#555" fill="none" />
    <path d="M606 690l18-10 16 20h-6l-10-8h-18z" fill="#4a4742" stroke="#111" />
    <path d="M995 492l8 8 50-27v-18l-50 28z" fill="#6a6861" stroke="#111" />
    <path d="M1003 500v-8l50-28" fill="none" stroke="#111" />
    <Wheel x={1100} y={455} />
    <Wheel x={964} y={532} />
    <path d="M1195 212l5 4v30l4 114-8 9z" fill="#5d5b56" stroke="#111" />
    <path d="M1197 217v150" stroke="#111" strokeWidth="3" strokeDasharray="9 5 3 11" />
    <path d="M1175 388l20-6v6l-6 2z" fill="#55534e" stroke="#000" />
    <path d="M1168 392l6-4 8 4v7l-5 2-9-5z" fill="#8f8c84" stroke="#111" />

    {/* side wall */}
    <path d="M483 617L1195 206V382L1177 389 920 537 642 700 624 681 583 705 499 754 483 763z" fill="#560a0b" stroke="#120202" />
    {/* front and rear side strips */}
    <path d="M483 617l17-10v147l-17 9z" fill="#7c0f11" />
    <path d="M1177 222l17-12v172l-17 7z" fill="#650c0e" />

    {/* roof */}
    <path d="M366 552L1058 158v-2l25-13 112 64-20 22L503 614l-20 5z" fill="url(#bevel)" />
    <path d="M1058 157v-2l25-12" fill="none" stroke="#16090a" strokeWidth="2" />
    <path d="M366 552L1058 157" stroke="#3a0506" strokeWidth="2" />
    <path d="M370 549L1056 157" stroke="#000" strokeWidth="1" strokeDasharray="9 3 2 3" />
    <path d="M400 545L1067 163" stroke="#160304" strokeWidth="1.500" />
    <path d="M495 598L640 515 940 344 1162 217" fill="none" stroke="#160304" strokeWidth="1.500" />
    <path d="M480 616L640 524 940 352 1173 220" fill="none" stroke="#350607" />
    <path d="M503 618L640 540 940 369 1173 236" fill="none" stroke="#080101" strokeWidth="1.500" />
    <path d="M390 543L494 601l7 6" fill="none" stroke="#000" strokeWidth="2.500" />
    <path d="M389 542L494 601" stroke="#a3a09a" strokeWidth=".8" strokeDasharray="2 3" />
    <path d="M1062 158l112 62" stroke="#000" strokeWidth="2.500" />
    <path d="M1062 158l112 62" stroke="#6d1515" strokeWidth="1" strokeDasharray="2 4" />
    <path d="M1083 144l112 64" stroke="#1a1a17" strokeWidth="5" />
    <path d="M1084 143l112 64" stroke="#77756c" strokeWidth="1" strokeDasharray="2 2" />
    <path d="M1132 172l2-6 3 7z" fill="#222" stroke="#000" />
    <path d="M1174 220l20-12" stroke="#d8cfc9" strokeWidth="2" strokeDasharray="3 2" />
    <g stroke="#f0b8b4" strokeWidth="1" strokeDasharray="2 3">
      {seams.map((s) => (
        <path key={s.x} d={`M${s.x} ${s.y}l102 57`} />
      ))}
      <path d="M1058 165l100 53M1088 152l95 56M1099 204l25-15M1145 197l8-5" />
      <path d="M534 471l104 59" />
      <path d="M384 546l96 58M450 573l16-9" />
    </g>
    <g stroke="#ef9c98" strokeWidth="2" strokeDasharray="1 2">
      <path d="M474 499l102 59M416 531l104 58M448 572l16-9M590 492l16-9" />
    </g>

    {/* side details */}
    <g stroke="#6d564f" strokeWidth="1.500">
      {ribs.map(([x, a, b]) => (
        <path key={x} d={`M${x} ${a}V${b}`} />
      ))}
    </g>
    <path d="M501 607V753" stroke="#000" strokeWidth="3" />
    <path d="M502 612v40" stroke="#77736b" />
    <path d="M495 615v45M494 716v32" stroke="#5a4540" />
    <path d="M1174 222V390" stroke="#000" strokeWidth="3" />
    <path d="M1179 225v152" stroke="#000" strokeWidth="1.500" />
    <path d="M1194 210V388" stroke="#000" strokeWidth="3" />
    <path d="M1173 360v26" stroke="#6c6a64" />
    <g stroke="#b98b88" strokeDasharray="3 3">
      <path d="M644 564l14-8M644 639l14-7M488 650l8-4M486 718l8-3M1182 241l9-4M1183 284l9-4M1181 316l9-4M1181 360l9-4" />
    </g>
    {latches.map(([x, y]) => (
      <g key={x}>
        <path d={`M${x} ${y}v20`} stroke="#000" strokeWidth="4" />
        <path d={`M${x} ${y + 6}v6`} stroke="#4d4d4d" />
      </g>
    ))}
    {bolts.map(([x, y]) => (
      <circle key={x} cx={x} cy={y} r="1.500" fill="#171010" />
    ))}
    <path d="M642 696L915 539v13L642 708z" fill="#0b0b0b" />
    <path d="M645 696L913 541" stroke="#c9ccd2" strokeWidth="2" strokeDasharray="52 8" />
    <path d="M646 702L914 547" stroke="#4f4f4f" strokeDasharray="3 2" />
    <path d="M642 692v15M914 537v14" stroke="#000" strokeWidth="3" />

    {/* front face */}
    <path d="M366 553l116 66v144h-5l-30-12-54-31-28-22z" fill="#788292" stroke="#0c0c0c" strokeWidth="1.500" />
    <path d="M366 553l112 64v8l-111-63z" fill="#5b5852" />
    <path d="M367 562l110 63" stroke="#111" strokeDasharray="5 1" />
    <path d="M367 552l115 66" stroke="#ded8cf" strokeWidth="2" />
    <path d="M476 617l7 2v144l-7 0z" fill="#615e58" stroke="#000" />
    <path d="M476 620V760" stroke="#000" strokeWidth="2" />
    <path d="M365 690l28 16 54 33 30 17v7l-30-12-54-31-28-22z" fill="#57544e" stroke="#0c0c0c" />
    <path d="M375 691l15 8v12l-14-8zM449 734l14 8v12l-13-6z" fill="#5f5d59" stroke="#111" />
    <path d="M406 718l12 2 16 12-5 1-22-11z" fill="#ddd9d1" stroke="#222" strokeWidth=".8" />
    <path d="M396 598l50 28V736l-50-28z" fill="#7a7e80" stroke="#050505" strokeWidth="3" />
    <path d="M398 603l46 25" stroke="#999c9b" strokeDasharray="2 2" />
    <path d="M447 627V751M393 640v78M421 592v20" stroke="#000" strokeWidth="2" />
    <path d="M371 612v36M448 618v20" stroke="#8a867a" strokeWidth=".8" />
    <path d="M366 636l10-2 17 13M446 680l28 12 11 0 28-17" fill="none" stroke="#1a140c" strokeWidth="4" />
    <path d="M366 636l10-2 17 13M446 680l28 12 11 0 28-17" fill="none" stroke="#5f5140" strokeWidth="2" />
    <path d="M372 631l10 2 1 7-11-2zM456 680l11 3v7l-11-2z" fill="#777" stroke="#000" strokeWidth="1.500" />
    <path d="M365 627v17l5-5M452 689v7l8-4M367 641l6-4M459 690l8-2" fill="none" stroke="#000" strokeWidth="2" />
    <path d="M392 637v26" stroke="#000" strokeWidth="4" />
    <circle cx="513" cy="674" r="2.500" fill="#111" />
  </g>
);

const Triad = () => (
  <g fontFamily="'Noto Sans', sans-serif">
    <path d="M127 759V742" stroke="#17691d" strokeWidth="4" />
    <path d="M127 732l5 11h-10z" fill="#2b9b33" stroke="#155c1a" strokeWidth=".6" />
    <path d="M127 759l-14-8" stroke="#1c1c9c" strokeWidth="4" />
    <path d="M104 746l11 1-4 7z" fill="#1d1da8" stroke="#0c0c60" strokeWidth=".6" />
    <path d="M127 759l-15 9" stroke="#b3181c" strokeWidth="4" />
    <path d="M104 772l6-8 5 7z" fill="#e22e33" stroke="#8c1014" strokeWidth=".6" />
    <text x="126" y="732" textAnchor="middle" fontSize="11" fill="#3aa543">Y</text>
    <text x="101" y="748" textAnchor="middle" fontSize="12" fill="#2c2ccc">Z</text>
    <text x="102" y="777" textAnchor="middle" fontSize="12" fill="#e0393d">X</text>
  </g>
);

const taskIcons = [
  { icon: "home", label: "Inicio" },
  { icon: "library", label: "Biblioteca de diseño" },
  { icon: "folder", label: "Explorador de archivos" },
  { icon: "viewPalette", label: "Paleta de visualización" },
  { icon: "ball", label: "Aspectos" },
  { icon: "props", label: "Propiedades personalizadas" },
];

const Viewport = () => (
  <main className="flex min-h-0 flex-1 bg-[#c4c8d4]">
    <button aria-label="Mostrar panel" className="mt-[311px] flex h-10 w-[9px] shrink-0 items-center justify-center bg-[#474747]">
      <span className="size-[5px] rounded-full bg-gray-200" />
    </button>
    <svg viewBox="96 130 1478 686" className="h-full min-w-0 flex-1" role="img" aria-label="Modelo de remolque">
      <defs>
        <linearGradient id="bevel" gradientUnits="userSpaceOnUse" x1="640" y1="527" x2="643" y2="532">
          <stop offset="0" stopColor="#d11c1e" />
          <stop offset=".5" stopColor="#a91618" />
          <stop offset="1" stopColor="#560a0b" />
        </linearGradient>
      </defs>
      <Trailer />
      <Triad />
    </svg>
    <aside className="mt-[25px] flex w-[26px] shrink-0 flex-col self-start border-l border-t border-[#808080]">
      {taskIcons.map((t, i) => (
        <button
          key={t.label}
          aria-label={t.label}
          className={`flex h-[25px] items-center justify-center border-b border-[#808080] ${i === 0 ? "bg-[#aeaeae]" : "bg-[#2d2d2d]"}`}
        >
          <Icon name={t.icon} className="size-4" />
        </button>
      ))}
    </aside>
  </main>
);

/* ---------- bottom ---------- */

const navPaths = ["M2 1v8M9 1v8L4 5z", "M7 1v8L2 5z", "M3 1v8l5-4z", "M8 1v8M1 1v8l5-4z"];

const BottomTabs = () => (
  <div className="flex h-[17px] shrink-0 border-t border-[#6d6f75] bg-[#474747] text-[12px] leading-4 text-gray-100">
    <div className="flex shrink-0">
      {navPaths.map((d) => (
        <button key={d} aria-label="Navegar pestañas" className="flex w-[17px] items-center justify-center border border-[#888aa0] bg-[#a6a9c0]">
          <svg viewBox="0 0 10 10" className="size-2.5" aria-hidden="true"><path d={d} fill="#7e819a" stroke="#7e819a" /></svg>
        </button>
      ))}
    </div>
    <button className="w-[73px] border-r border-[#7a7a7a] text-center font-bold text-white">Modelo</button>
    <button className="w-[182px] border-r border-[#7a7a7a] bg-[#2f2f2f] pr-4 pl-1 text-center">Estudio de movimiento 1</button>
  </div>
);

const StatusBar = () => (
  <footer className="flex h-4 shrink-0 items-start overflow-hidden border-t border-[#777] bg-[#949494] text-[12px] leading-[18px] text-gray-100">
    <span className="flex-1 whitespace-nowrap pl-px">SOLIDWORKS Premium 2025 SP1.2</span>
    <div className="flex w-[485px] shrink-0 gap-[5px] whitespace-nowrap">
      <span>Insuficientemente definida</span>
      <span>Configuración de ensamblaje grande</span>
      <span>Editando Ensamblaje</span>
    </div>
    <div className="flex w-[253px] shrink-0">
      <Icon name="rebuild" className="ml-[22px] mt-0.5 size-3.5" />
      <span className="ml-[96px]">MMGS</span>
      <svg viewBox="0 0 6 4" className="ml-[42px] mt-2 h-1 w-1.5" aria-hidden="true"><path d="M0 4h6L3 0z" fill="#f3f3f3" /></svg>
      <Icon name="tag" className="ml-5 mt-0.5 size-[15px]" />
    </div>
  </footer>
);

export default function App() {
  return (
    <div className="flex h-screen min-h-[760px] flex-col overflow-hidden bg-[#474747] font-['Noto_Sans','Open_Sans',sans-serif]">
      <TitleBar />
      <Ribbon />
      <TabRow />
      <div className="flex min-h-0 flex-1">
        <div className="flex w-[86px] shrink-0 bg-[#474747]">
          <ToolColumn tools={leftTools} className="w-[43px] border-b border-[#7a7a7a] pb-1.5" />
          <ToolColumn tools={sketchTools} className="w-[43px] border-b border-l border-[#7a7a7a] pb-1.5" />
        </div>
        <div className="flex min-w-0 flex-1 flex-col border-l border-[#9a9da5]">
          <Viewport />
          <BottomTabs />
        </div>
      </div>
      <StatusBar />
    </div>
  );
}
